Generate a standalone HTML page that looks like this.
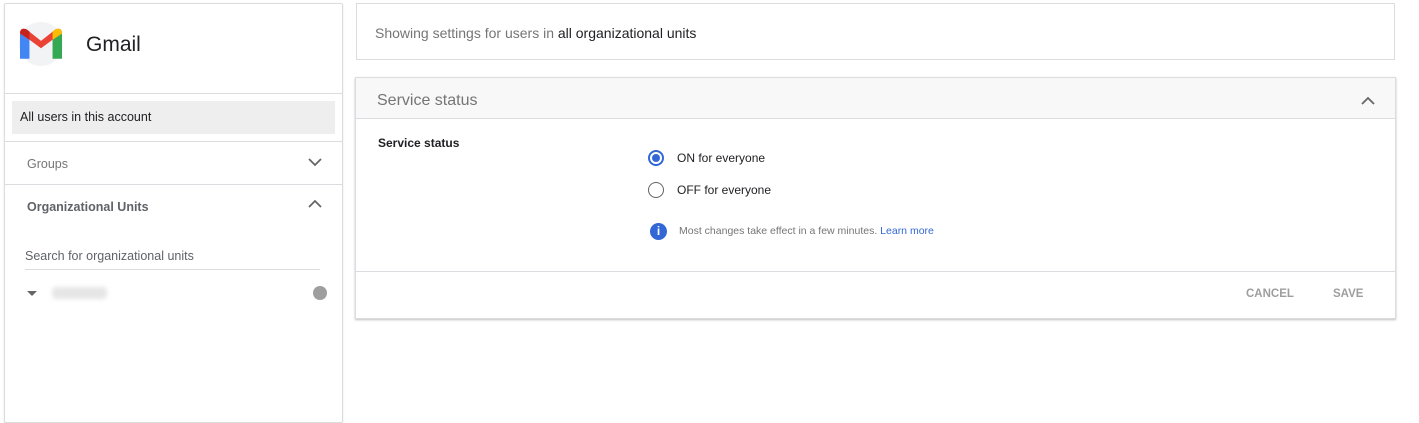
<!DOCTYPE html>
<html><head><style>
*{box-sizing:border-box;margin:0;padding:0}
body{width:1419px;height:413px;background:#fff;font-family:"Liberation Sans",Arial,sans-serif;position:relative;overflow:hidden;color:#202124}
.a{position:absolute}
</style></head><body>
<div class="a" style="left:4px;top:3px;width:339px;height:420px;border:1px solid #dadce0;border-radius:2px;box-shadow:0 1px 2px rgba(0,0,0,.1)"></div>
<div class="a" style="left:19px;top:22px;width:44px;height:44px;border-radius:50%;background:#f1f3f4"></div>
<svg class="a" style="left:20px;top:27px" width="42" height="34" viewBox="0 0 40 32">
<path d="M0 6 L0 30 L9 30 L9 12 Z" fill="#4285f4"/>
<path d="M31 12 L31 30 L40 30 L40 6 Z" fill="#34a853"/>
<path d="M0 6 Q0 0 6 2 L20 13 L34 2 Q40 0 40 6 L31 12 L20 20 L9 12 Z" fill="#ea4335"/>
<path d="M0 6 Q0 0 6 2 L9 4 L9 12 Z" fill="#c5221f"/>
<path d="M40 6 Q40 0 34 2 L31 4 L31 12 Z" fill="#fbbc04"/>
</svg>
<div class="a" style="left:86px;top:33px;font-size:21px;color:#202124">Gmail</div>
<div class="a" style="left:5px;top:93px;width:337px;border-top:1px solid #dadce0"></div>
<div class="a" style="left:12px;top:101px;width:323px;height:33px;background:#eeeeee"></div>
<div class="a" style="left:20px;top:110px;font-size:12.5px">All users in this account</div>
<div class="a" style="left:5px;top:141px;width:337px;border-top:1px solid #dadce0"></div>
<div class="a" style="left:27px;top:157px;font-size:12.5px;color:#757575">Groups</div>
<svg class="a" style="left:308px;top:157px" width="14" height="10"><path d="M1 2 L7 8 L13 2" stroke="#666" stroke-width="1.8" fill="none"/></svg>
<div class="a" style="left:5px;top:184px;width:337px;border-top:1px solid #dadce0"></div>
<div class="a" style="left:27px;top:200px;font-size:12.5px;color:#5f6368;font-weight:bold">Organizational Units</div>
<svg class="a" style="left:308px;top:199px" width="14" height="10"><path d="M1 8 L7 2 L13 8" stroke="#666" stroke-width="1.8" fill="none"/></svg>
<div class="a" style="left:25px;top:249px;font-size:12.5px;color:#5f6368">Search for organizational units</div>
<div class="a" style="left:25px;top:269px;width:295px;border-top:1px solid #dadce0"></div>
<div class="a" style="left:27px;top:291px;width:0;height:0;border-left:5px solid transparent;border-right:5px solid transparent;border-top:5px solid #666"></div>
<div class="a" style="left:52px;top:287px;width:55px;height:12px;background:#e6e6e6;border-radius:4px;filter:blur(2px)"></div>
<div class="a" style="left:313px;top:286px;width:14px;height:14px;border-radius:50%;background:#9e9e9e"></div>

<div class="a" style="left:356px;top:3px;width:1039px;height:57px;border:1px solid #dadce0"></div>
<div class="a" style="left:375px;top:25px;font-size:14px;color:#757575">Showing settings for users in <span style="color:#202124">all organizational units</span></div>

<div class="a" style="left:355px;top:77px;width:1041px;height:242px;border:1px solid #dadce0;box-shadow:0 1px 2px rgba(0,0,0,.25)"></div>
<div class="a" style="left:356px;top:78px;width:1039px;height:41px;background:#f8f8f8;border-bottom:1px solid #dadce0"></div>
<div class="a" style="left:377px;top:92px;font-size:16px;color:#757575">Service status</div>
<svg class="a" style="left:1361px;top:96px" width="14" height="10"><path d="M1 8 L7 2 L13 8" stroke="#666" stroke-width="1.8" fill="none"/></svg>
<div class="a" style="left:378px;top:136px;font-size:12px;font-weight:bold">Service status</div>
<div class="a" style="left:648px;top:150px;width:16px;height:16px;border-radius:50%;border:2px solid #3367d6"></div>
<div class="a" style="left:652px;top:154px;width:8px;height:8px;border-radius:50%;background:#3367d6"></div>
<div class="a" style="left:677px;top:151px;font-size:12px">ON for everyone</div>
<div class="a" style="left:648px;top:182px;width:16px;height:16px;border-radius:50%;border:1.5px solid #5f6368"></div>
<div class="a" style="left:677px;top:183px;font-size:12px">OFF for everyone</div>
<div class="a" style="left:650px;top:223px;width:17px;height:17px;border-radius:50%;background:#3367d6;color:#fff;font-size:12px;font-weight:bold;text-align:center;line-height:17px">i</div>
<div class="a" style="left:679px;top:225px;font-size:10.5px;color:#757575">Most changes take effect in a few minutes. <span style="color:#3367d6">Learn more</span></div>
<div class="a" style="left:356px;top:271px;width:1039px;border-top:1px solid #dadce0"></div>
<div class="a" style="left:1246px;top:288px;font-size:11.5px;color:#9e9e9e;font-weight:bold">CANCEL</div>
<div class="a" style="left:1333px;top:288px;font-size:11.5px;color:#9e9e9e;font-weight:bold">SAVE</div>
</body></html>
